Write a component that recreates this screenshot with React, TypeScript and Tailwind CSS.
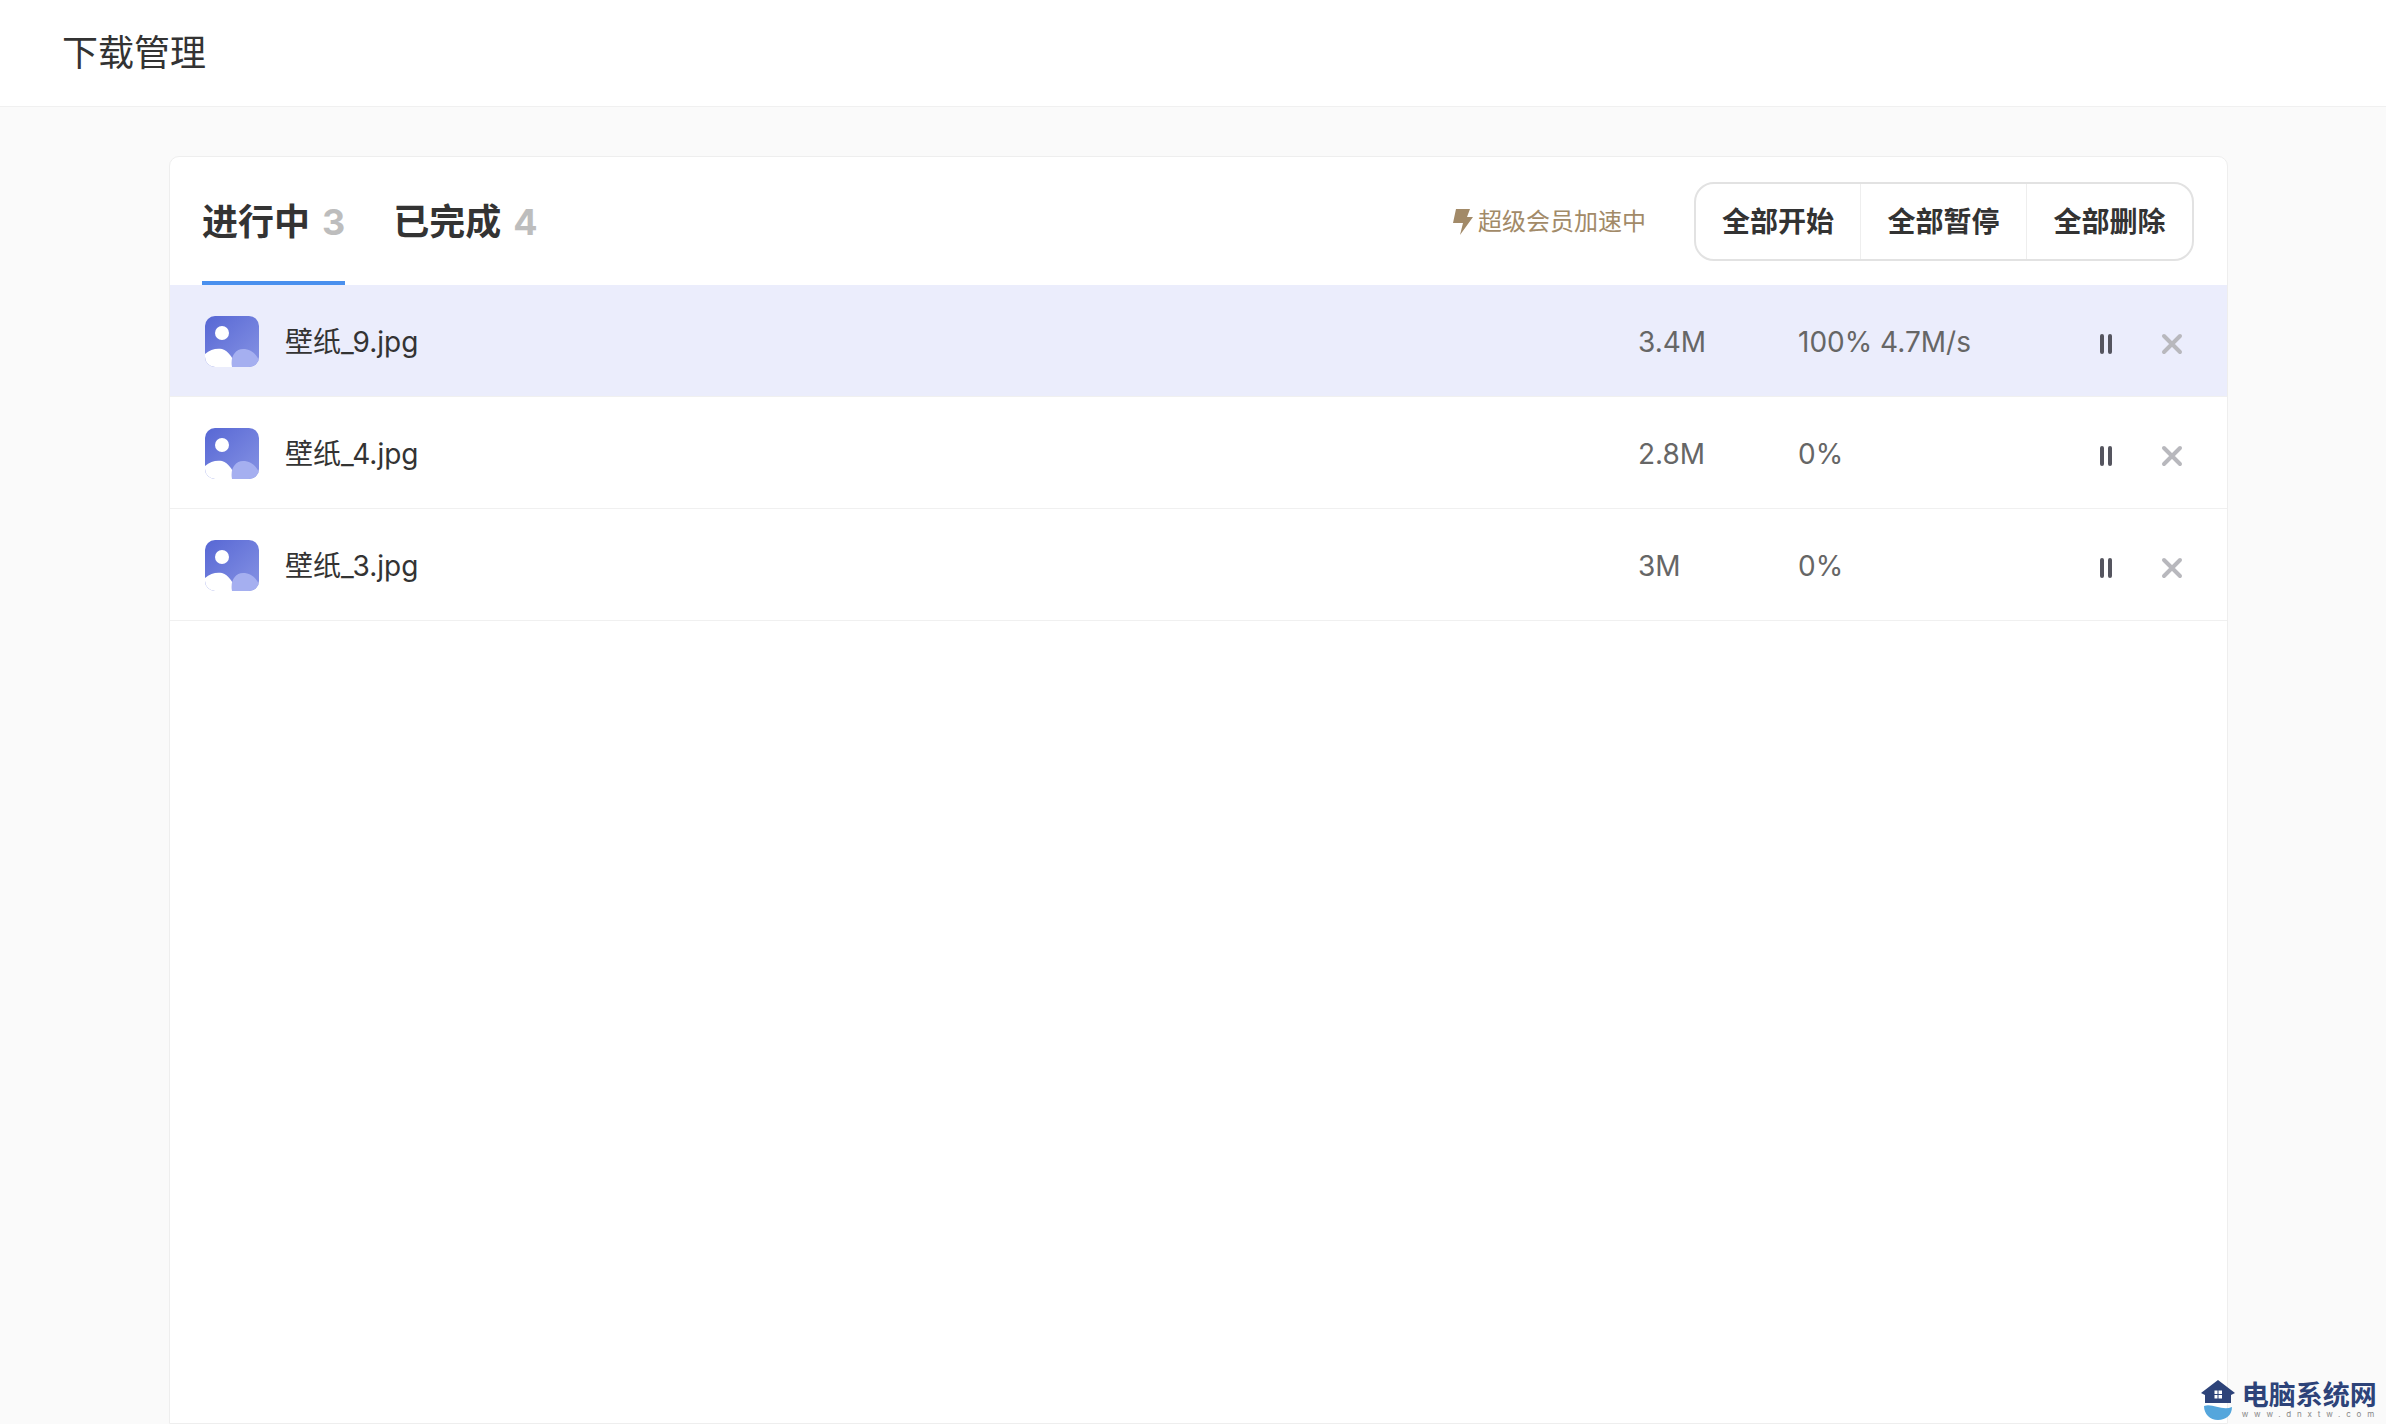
import React from 'react';

const rows = [
  { name: '壁纸_9.jpg', size: '3.4M', progress: '100%', speed: '4.7M/s', active: true },
  { name: '壁纸_4.jpg', size: '2.8M', progress: '0%', speed: '', active: false },
  { name: '壁纸_3.jpg', size: '3M', progress: '0%', speed: '', active: false },
];

function FileIcon({ id }: { id: string }) {
  return (
    <svg width="54" height="51" viewBox="0 0 54 51" className="shrink-0">
      <defs>
        <linearGradient id={id} x1="0" y1="0" x2="1" y2="1">
          <stop offset="0" stopColor="#5767d4" />
          <stop offset="1" stopColor="#8693e4" />
        </linearGradient>
        <clipPath id={`${id}-clip`}>
          <rect width="54" height="51" rx="10" />
        </clipPath>
      </defs>
      <g clipPath={`url(#${id}-clip)`}>
        <rect width="54" height="51" fill={`url(#${id})`} />
        <circle cx="17" cy="17" r="7" fill="#fff" />
        <path d="M0 38 C5 33 12 32 17 33 C24 35 28 43 32 51 L0 51 Z" fill="#fff" />
        <path d="M27 51 C25 41 30 33 38 33 C46 33 51 38 54 44 L54 51 Z" fill="#a5aff0" />
      </g>
    </svg>
  );
}

function Row({ name, size, progress, speed, active, id }: (typeof rows)[number] & { id: string }) {
  return (
    <div className={`flex h-[112px] items-center border-b border-[#f0f0f0] pl-[35px] pt-[2px] ${active ? 'bg-[#ebedfc]' : 'bg-white'}`}>
      <FileIcon id={id} />
      <div className="ml-[26px] flex-1 text-[28px] text-[#333]">{name}</div>
      <div className="w-[160px] text-[28px] text-[#666]">{size}</div>
      <div className="w-[283px] text-[28px] text-[#666]">
        {progress} {speed}
      </div>
      <div className="mt-[4px] flex w-[50px] items-center justify-center gap-[4px]">
        <span className="h-[20px] w-[4px] rounded-[2px] bg-[#55555f]" />
        <span className="h-[20px] w-[4px] rounded-[2px] bg-[#55555f]" />
      </div>
      <svg width="24" height="24" viewBox="0 0 24 24" className="ml-[29px] mr-[43px] mt-[4px]">
        <path d="M4 4 L20 20 M20 4 L4 20" stroke="#b8b8bd" strokeWidth="4" strokeLinecap="round" />
      </svg>
    </div>
  );
}

function App() {
  return (
    <div className="relative flex h-screen flex-col overflow-hidden bg-[#fafafa] font-['Inter','Noto_Sans_CJK_SC',sans-serif]">
      {/* Header */}
      <div className="flex h-[107px] shrink-0 items-center border-b border-[#f0f0f0] bg-white pl-[62px] text-[36px] text-[#333]">
        下载管理
      </div>

      <div className="flex-1 pl-[169px] pr-[158px] pt-[49px]">
        <div className="h-full rounded-t-[10px] border border-[#eeeeee] bg-white">
          {/* Tabs */}
          <div className="flex h-[128px] items-stretch pl-[32px] pr-[33px]">
            <div className="flex items-center gap-[48px] self-stretch">
              <div className="flex h-full items-center border-b-[4px] border-[#4a90ee] pt-[6px] text-[36px] font-semibold text-[#333]">
                进行中<span className="ml-[12px] font-bold text-[#bdbdbd]">3</span>
              </div>
              <div className="flex h-full items-center pt-[2px] text-[36px] font-semibold text-[#333]">
                已完成<span className="ml-[12px] font-bold text-[#bdbdbd]">4</span>
              </div>
            </div>
            <div className="ml-auto flex items-center">
              <svg width="22" height="28" viewBox="0 0 22 28" className="mr-[4px] mt-[2px]">
                <path d="M4 1 H18 L15 9 H21 L8 27 L11 15 H1 Z" fill="#a28a68" />
              </svg>
              <span className="mt-[2px] text-[24px] text-[#a28a68]">超级会员加速中</span>
              <div className="ml-[48px] flex h-[79px] items-center rounded-[20px] border-2 border-[#e2e2e2] text-[28px] font-semibold text-[#333]">
                <div className="flex h-full w-[165px] items-center justify-center border-r border-[#eeeeee] pt-[2px]">全部开始</div>
                <div className="flex h-full w-[166px] items-center justify-center border-r border-[#eeeeee] pt-[2px]">全部暂停</div>
                <div className="flex h-full w-[165px] items-center justify-center pt-[2px]">全部删除</div>
              </div>
            </div>
          </div>

          {/* Download list */}
          {rows.map((row, i) => (
            <Row key={row.name} id={`file-icon-${i}`} {...row} />
          ))}
        </div>
      </div>

      {/* Watermark */}
      <div className="absolute bottom-[3px] right-[6px] flex items-center gap-[6px]">
        <svg width="36" height="42" viewBox="0 0 36 42">
          <path d="M18 1 L35 14 L31 16 L31 24 L5 24 L5 16 L1 14 Z" fill="#2d4379" />
          <path d="M14 11 H22.5 V20 H14 Z M18 11 V20 M14 15.5 H22.5" fill="#fff" stroke="#2d4379" strokeWidth="1" />
          <path d="M4 27 C12 24 22 32 32 28 C32 36 26 41 18 41 C10 41 4 35 4 27 Z" fill="#55a6dc" />
        </svg>
        <div className="flex flex-col items-start leading-none">
          <span className="text-[27px] font-bold leading-[28px] text-[#2d4379]">电脑系统网</span>
          <span className="text-[8px] tracking-[5.8px] text-[#888]">www.dnxtw.com</span>
        </div>
      </div>
    </div>
  );
}

export default App;
